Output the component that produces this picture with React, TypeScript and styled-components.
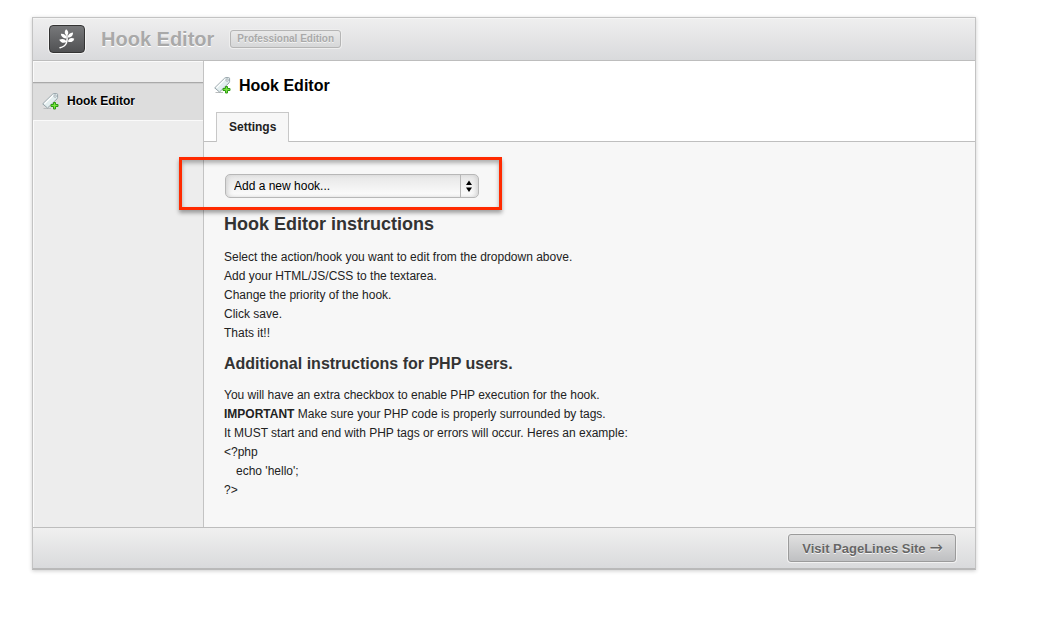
import React from "react";
import styled, { createGlobalStyle } from "styled-components";

const Global = createGlobalStyle`
  * { box-sizing: border-box; }
  body {
    margin: 0;
    background: #fff;
    color: #222;
    font: 12px/19px "Liberation Sans", Arial, Helvetica, sans-serif;
  }
  h1, h2, h3, p { margin: 0; }
`;

const Page = styled.div`
  padding: 17px 74px 53px 32px;
`;

const Frame = styled.div`
  border: 1px solid #c3c3c3;
  border-bottom: 2px solid #b9b9b9;
  box-shadow: 0 1px 4px rgba(0, 0, 0, 0.2);
`;

const Header = styled.header`
  display: flex;
  align-items: center;
  height: 43px;
  padding: 0 16px;
  border-bottom: 1px solid #bdbdbd;
  background: linear-gradient(#efefef, #d9dadc);
  box-shadow: inset 0 1px 0 #f5f5f5;
`;

const Logo = styled.div`
  display: flex;
  align-items: center;
  justify-content: center;
  width: 36px;
  height: 28px;
  border: 1px solid #333;
  border-radius: 4px;
  background: linear-gradient(#77787a, #505153);
  box-shadow: 0 0 0 1px #f4f4f4;
`;

const Product = styled.h1`
  margin-left: 16px;
  color: #a9a9a9;
  font-size: 20px;
  line-height: 24px;
  text-shadow: 0 1px 0 #fff;
`;

const Badge = styled.span`
  margin-left: 16px;
  padding: 0 6px;
  border: 1px solid #b5b5b5;
  border-radius: 3px;
  background: linear-gradient(#e9e9e9, #d6d7d8);
  box-shadow: 0 0 0 1px #eee;
  color: #a9a9a9;
  font-size: 10px;
  font-weight: bold;
  line-height: 16px;
  text-shadow: 0 1px 0 #f4f4f4;
`;

const Columns = styled.div`
  display: grid;
  grid-template-columns: 171px 1fr;
`;

const Sidebar = styled.nav`
  padding-top: 21px;
  border-right: 1px solid #c3c3c3;
  background: #ededed;
  box-shadow: inset 1px 1px 0 #fafafa;
`;

const SideLink = styled.a`
  display: flex;
  align-items: center;
  gap: 8px;
  height: 39px;
  padding: 0 9px;
  border-top: 1px solid #a9a9a9;
  border-bottom: 1px solid #fafafa;
  background: #dddddd;
  box-shadow: inset 0 1px 0 #cfcfcf;
  color: #000;
  font-weight: bold;
  text-decoration: none;
  text-shadow: 0 1px 0 #fff;
`;

const Main = styled.main`
  background: #fff;
`;

const TitleBar = styled.div`
  display: flex;
  align-items: center;
  gap: 8px;
  height: 51px;
  padding: 0 10px 2px;
`;

const Title = styled.h2`
  color: #000;
  font-size: 16px;
  line-height: 20px;
`;

const Tabs = styled.div`
  display: flex;
  padding-left: 12px;
  border-bottom: 1px solid #bfbfbf;
`;

const Tab = styled.button`
  height: 30px;
  margin-bottom: -1px;
  padding: 0 12px 2px;
  border: 1px solid #c8c8c8;
  border-bottom: 0;
  background: #f7f7f7;
  color: #222;
  font: bold 12px "Liberation Sans", Arial, sans-serif;
`;

const Panel = styled.section`
  padding: 32px 20px 27px;
  background: #f7f7f7;
`;

const Picker = styled.div`
  position: relative;
  width: 254px;
  height: 24px;
  margin-left: 1px;
`;

const Select = styled.select`
  appearance: none;
  width: 100%;
  height: 100%;
  padding: 0 26px 0 8px;
  border: 1px solid #b7b7b7;
  border-radius: 5px;
  background: linear-gradient(#e6e6e6, #fdfdfd);
  box-shadow: inset 3px 0 4px -1px #d5d5d5, inset -3px 0 4px -1px #d5d5d5;
  color: #000;
  font: 12px "Liberation Sans", Arial, sans-serif;
`;

const Stepper = styled.svg`
  position: absolute;
  top: 1px;
  right: 1px;
  pointer-events: none;
`;

const Callout = styled.div`
  position: absolute;
  inset: -17px -23px -12px -46px;
  border: 3px solid #ff2a00;
  box-shadow: 0 3px 4px rgba(0, 0, 0, 0.35), inset 0 3px 4px rgba(0, 0, 0, 0.3);
  pointer-events: none;
`;

const Heading = styled.h2`
  margin-top: 14px;
  margin-bottom: 12px;
  color: #333;
  font-size: 18px;
  line-height: 24px;
`;

const Subheading = styled.h3`
  margin: 10px 0 12px;
  color: #333;
  font-size: 16px;
  line-height: 21px;
`;

const Indented = styled.p`
  padding-left: 12px;
`;

const Footer = styled.footer`
  display: flex;
  align-items: center;
  justify-content: flex-end;
  height: 41px;
  padding: 0 19px;
  border-top: 1px solid #bdbdbd;
  background: linear-gradient(#f0f0f0, #d9dadc);
`;

const SiteButton = styled.button`
  display: flex;
  align-items: center;
  gap: 4px;
  height: 28px;
  padding: 0 12px 0 13px;
  border: 1px solid #9b9b9b;
  border-radius: 3px;
  background: linear-gradient(#e0e0e0, #bfc0c2);
  box-shadow: 0 0 0 1px #f2f2f2;
  color: #666;
  font: bold 13px "Liberation Sans", Arial, sans-serif;
  text-shadow: 0 1px 0 #f4f4f4;
`;

const Arrow = styled.span`
  font: 16px/16px "DejaVu Sans", sans-serif;
`;

const Leaf = () => (
  <svg width="18" height="20" viewBox="0 0 18 20" fill="#fff" aria-hidden="true">
    <path d="M8.200 .3C6 2.500 6.400 5 8.900 6.600C11 4.500 10.700 2 8.200 .3Z" />
    <path d="M8.700 9.300C5.500 9.800 3.200 8 2.800 4.800C6.300 4.600 8.500 6.200 8.700 9.300Z" />
    <path d="M9.700 8.600C9.800 5.600 11.700 3.600 15 3.500C15.200 6.700 13 8.700 9.700 8.600Z" />
    <path d="M8.700 13C5.500 14.700 2.600 13.600 1.200 10.700C4.500 9.300 7.500 10 8.700 13Z" />
    <path d="M9.800 12.500C10.800 9.400 13.300 8.300 16.300 9.700C15.300 12.600 12.700 13.900 9.800 12.500Z" />
    <path d="M8.900 6C9.700 12 9.200 17 2 18.700" fill="none" stroke="#fff" strokeWidth="1.400" strokeLinecap="round" />
  </svg>
);

const TagAdd = () => (
  <svg width="17" height="17" viewBox="0 0 17 17" aria-hidden="true">
    <path d="M1.500 15.500H9" stroke="#b9bcbd" />
    <path d="M10.600 1.200Q11.200 .6 12 .6H14.600Q15.600 .6 15.600 1.600V4.500Q15.600 5.300 15 5.900L5.500 15L.7 10.900Z" fill="#e3eeef" stroke="#95a2a8" strokeLinejoin="round" />
    <path d="M11.200 2.200L2.500 10.700" stroke="#fff" strokeWidth="1.200" />
    <circle cx="13.100" cy="3.100" r="1.200" fill="#fff" stroke="#95a2a8" strokeWidth=".8" />
    <path d="M11.500 9.500h2v2h2.500v2h-2.500v2.500h-2v-2.500H9v-2h2.500Z" fill="#78e83e" stroke="#2f9a14" />
  </svg>
);

export default function App() {
  return (
    <Page>
      <Global />
      <Frame>
        <Header>
          <Logo><Leaf /></Logo>
          <Product>Hook Editor</Product>
          <Badge>Professional Edition</Badge>
        </Header>
        <Columns>
          <Sidebar>
            <SideLink href="#hook-editor"><TagAdd />Hook Editor</SideLink>
          </Sidebar>
          <Main id="hook-editor">
            <TitleBar><TagAdd /><Title>Hook Editor</Title></TitleBar>
            <Tabs role="tablist"><Tab role="tab" aria-selected="true">Settings</Tab></Tabs>
            <Panel role="tabpanel">
              <Picker>
                <Select aria-label="Hook">
                  <option>Add a new hook...</option>
                </Select>
                <Stepper width="18" height="22" viewBox="0 0 18 22" aria-hidden="true">
                  <path d="M.5 0V22" stroke="#b7b7b7" />
                  <path d="M9 5.500L12 10H6ZM6 12.500H12L9 17Z" fill="#000" />
                </Stepper>
                <Callout />
              </Picker>
              <Heading>Hook Editor instructions</Heading>
              <p>Select the action/hook you want to edit from the dropdown above.</p>
              <p>Add your HTML/JS/CSS to the textarea.</p>
              <p>Change the priority of the hook.</p>
              <p>Click save.</p>
              <p>Thats it!!</p>
              <Subheading>Additional instructions for PHP users.</Subheading>
              <p>You will have an extra checkbox to enable PHP execution for the hook.</p>
              <p><strong>IMPORTANT</strong> Make sure your PHP code is properly surrounded by tags.</p>
              <p>It MUST start and end with PHP tags or errors will occur. Heres an example:</p>
              <p>&lt;?php</p>
              <Indented>echo 'hello';</Indented>
              <p>?&gt;</p>
            </Panel>
          </Main>
        </Columns>
        <Footer>
          <SiteButton>Visit PageLines Site <Arrow>→</Arrow></SiteButton>
        </Footer>
      </Frame>
    </Page>
  );
}
